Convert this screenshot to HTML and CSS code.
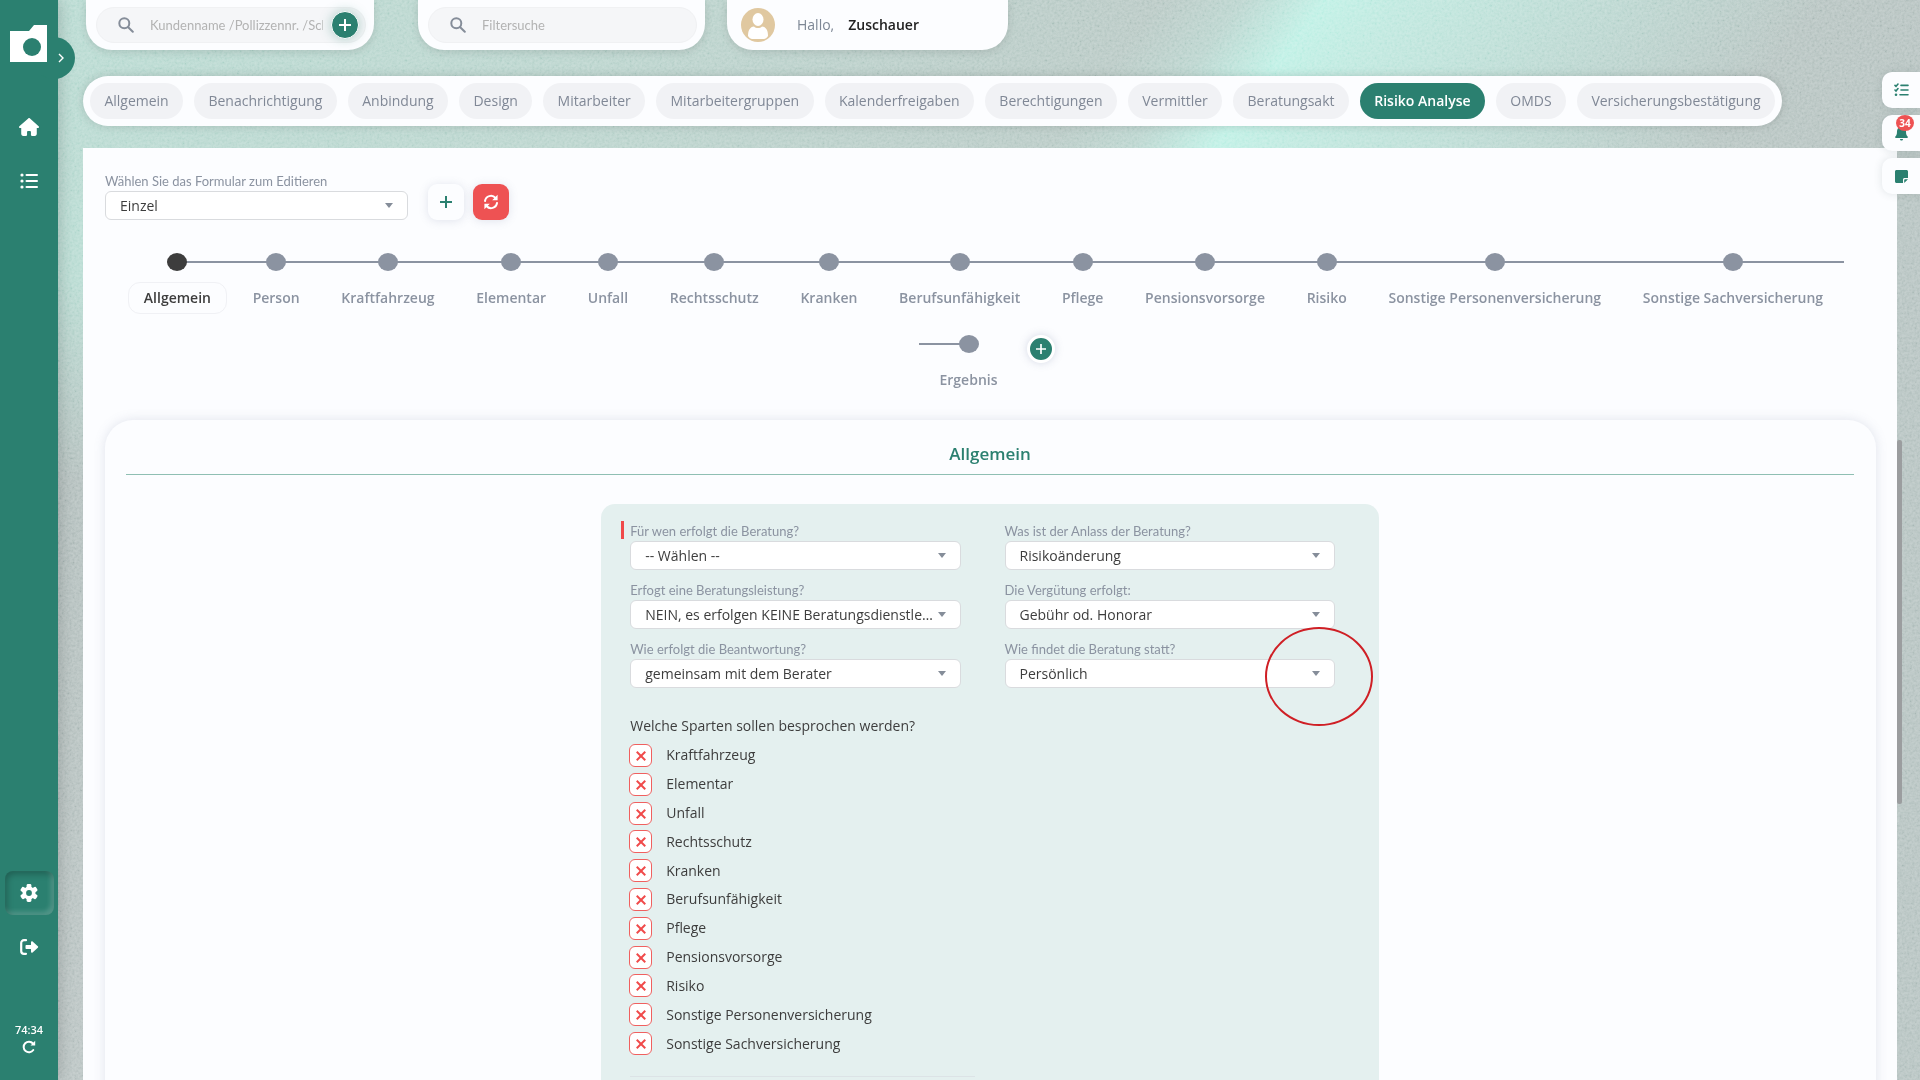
FILE: index.html
```html
<!DOCTYPE html>
<html lang="de">
<head>
<meta charset="utf-8">
<title>Risiko Analyse</title>
<link rel="stylesheet" href="styles.css">
</head>
<body>
<svg class="grain" aria-hidden="true"><filter id="noise" x="0" y="0" width="100%" height="100%"><feTurbulence type="fractalNoise" baseFrequency="0.4" numOctaves="2"/><feColorMatrix values="1.500 0 0 0 -.25  1.500 0 0 0 -.25  1.500 0 0 0 -.25  0 0 0 0 1"/></filter><rect width="100%" height="100%" filter="url(#noise)"/></svg>
<div class="app">
  <aside class="sidebar">
    <button class="toggle" aria-label="Menü öffnen"><svg width="6" height="10" viewBox="0 0 6 10"><path d="M1 1l4 4-4 4" fill="none" stroke="#fff" stroke-width="1.4"/></svg></button>
    <a class="logo" href="#" aria-label="Startseite"><svg width="37" height="37" viewBox="0 0 37 37"><path d="M0 6h19l5-6h13v37H0z" fill="#fff"/><circle cx="22" cy="22" r="9" fill="#2b8070"/></svg></a>
    <nav class="side-nav">
      <a href="#" aria-label="Home"><svg width="20" height="18" viewBox="0 0 576 512"><path fill="#fff" d="M575.8 255.5c0 18-15 32.1-32 32.1h-32l.7 160.2c0 35.300-20 64.200-56 64.200H368c-13 0-24-11-24-24v-88c0-17.700-14.300-32-32-32h-48c-17.700 0-32 14.300-32 32v88c0 13-11 24-24 24H120c-36 0-56-28.900-56-64.200V287.600H32c-18 0-32-14-32-32.100 0-9 3-17 10-24L266.400 8c7-7 15-8 22-8s15 2 21 7l255.400 224.500c8 7 12 15 11 24z"/></svg></a>
      <a href="#" aria-label="Liste"><svg width="18" height="16" viewBox="0 0 18 16"><g fill="#fff"><circle cx="2" cy="2" r="1.6"/><circle cx="2" cy="8" r="1.600"/><circle cx="2" cy="14" r="1.600"/><rect x="5.500" y="1" width="12.500" height="2" rx="1"/><rect x="5.500" y="7" width="12.500" height="2" rx="1"/><rect x="5.500" y="13" width="12.500" height="2" rx="1"/></g></svg></a>
    </nav>
    <nav class="side-nav bottom">
      <a class="current" href="#" aria-label="Einstellungen"><svg width="18" height="18" viewBox="-9 -9 18 18"><g fill="#fff"><circle r="6.500"/><rect x="-2.400" y="-9" width="4.800" height="18" rx="1.400"/><rect x="-2.400" y="-9" width="4.800" height="18" rx="1.400" transform="rotate(60)"/><rect x="-2.400" y="-9" width="4.800" height="18" rx="1.400" transform="rotate(120)"/></g><circle r="2.900" fill="#2b8070"/></svg></a>
      <a href="#" aria-label="Abmelden"><svg width="19" height="16" viewBox="0 0 19 16"><path d="M6 1.200H4A2.800 2.800 0 0 0 1.200 4v8A2.800 2.800 0 0 0 4 14.800h2" fill="none" stroke="#fff" stroke-width="2.200" stroke-linecap="round"/><path d="M6.500 6H11V3.200c0-1 1-1.200 1.600-.6l5.200 4.700c.5.400.5 1 0 1.400l-5.200 4.700c-.6.600-1.600.4-1.600-.6V10H6.500c-.6 0-1-.4-1-1V7c0-.6.4-1 1-1z" fill="#fff"/></svg></a>
    </nav>
    <span class="timer">74:34</span>
    <button class="renew" aria-label="Sitzung erneuern"><svg width="14" height="14" viewBox="0 0 14 14"><path d="M11.300 10A5.300 5.300 0 1 1 11 3.500" fill="none" stroke="#fff" stroke-width="2" stroke-linecap="round"/><path d="M13.200.8v4.700H8.500z" fill="#fff"/></svg></button>
  </aside>

  <div class="page">
    <header class="top">
      <div class="box search-client">
        <div class="search"><svg class="lens" width="16" height="16" viewBox="0 0 16 16"><circle cx="6.300" cy="6.300" r="5" /><path d="M10.200 10.200l4.600 4.600"/></svg><input type="text" aria-label="Kundensuche" placeholder="Kundenname /Pollizzennr. /Schadennr."><button class="round" aria-label="Neuer Kunde"><svg width="12" height="12" viewBox="0 0 12 12"><path d="M6 0v12M0 6h12"/></svg></button></div>
      </div>
      <div class="box search-filter">
        <div class="search"><svg class="lens" width="16" height="16" viewBox="0 0 16 16"><circle cx="6.300" cy="6.300" r="5" /><path d="M10.200 10.200l4.600 4.600"/></svg><input type="text" aria-label="Filtersuche" placeholder="Filtersuche"></div>
      </div>
      <div class="box user">
        <svg width="34" height="34" viewBox="0 0 34 34"><circle cx="17" cy="17" r="17" fill="#e0c8a0"/><ellipse cx="17" cy="11.500" rx="5.500" ry="6.500" fill="#fff"/><path d="M7 28c0-6 2-9 6-9.500 2 2 6 2 8 0 4 .5 6 3.500 6 9.500-1 2-3 3-4 3H11c-1 0-3-1-4-3z" fill="#fff"/></svg>
        <span>Hallo,</span><strong>Zuschauer</strong>
      </div>
    </header>

    <nav class="tabs">
      <a href="#">Allgemein</a><a href="#">Benachrichtigung</a><a href="#">Anbindung</a><a href="#">Design</a><a href="#">Mitarbeiter</a><a href="#">Mitarbeitergruppen</a><a href="#">Kalenderfreigaben</a><a href="#">Berechtigungen</a><a href="#">Vermittler</a><a href="#">Beratungsakt</a><a class="active" href="#">Risiko Analyse</a><a href="#">OMDS</a><a href="#">Versicherungsbestätigung</a>
    </nav>

    <main class="content">
      <div class="form-pick">
        <div class="field">
          <label for="form">Wählen Sie das Formular zum Editieren</label>
          <div class="select"><select id="form"><option>Einzel</option></select></div>
        </div>
        <button class="tool" aria-label="Hinzufügen"><svg width="12" height="12" viewBox="0 0 12 12"><path d="M6 0v12M0 6h12" stroke="#2b8070" stroke-width="2"/></svg></button>
        <button class="tool danger" aria-label="Zurücksetzen"><svg width="16" height="16" viewBox="0 0 16 16"><g fill="none" stroke="#fff" stroke-width="2" stroke-linecap="round"><path d="M2 7a6 6 0 0 1 10.500-3"/><path d="M14 9a6 6 0 0 1-10.500 3"/></g><path d="M14.600.8v5.400H9.200zM1.400 15.200V9.800h5.400z" fill="#fff"/></svg></button>
      </div>

      <ol class="steps">
        <li class="now"><a href="#">Allgemein</a></li><li><a href="#">Person</a></li><li><a href="#">Kraftfahrzeug</a></li><li><a href="#">Elementar</a></li><li><a href="#">Unfall</a></li><li><a href="#">Rechtsschutz</a></li><li><a href="#">Kranken</a></li><li><a href="#">Berufsunfähigkeit</a></li><li><a href="#">Pflege</a></li><li><a href="#">Pensionsvorsorge</a></li><li><a href="#">Risiko</a></li><li><a href="#">Sonstige Personenversicherung</a></li><li><a href="#">Sonstige Sachversicherung</a></li>
      </ol>
      <div class="steps-end">
        <ol class="steps last"><li><a href="#">Ergebnis</a></li></ol>
        <button class="round small" aria-label="Schritt hinzufügen"><svg width="10" height="10" viewBox="0 0 12 12"><path d="M6 0v12M0 6h12"/></svg></button>
      </div>

      <section class="card">
        <h1>Allgemein</h1>
        <form class="panel">
          <div class="fields">
            <div class="field required"><label for="wen">Für wen erfolgt die Beratung?</label><div class="select"><select id="wen"><option>-- Wählen --</option></select></div></div>
            <div class="field"><label for="anlass">Was ist der Anlass der Beratung?</label><div class="select"><select id="anlass"><option>Risikoänderung</option></select></div></div>
            <div class="field"><label for="leistung">Erfogt eine Beratungsleistung?</label><div class="select"><select id="leistung"><option>NEIN, es erfolgen KEINE Beratungsdienstleistungen</option></select></div></div>
            <div class="field"><label for="verg">Die Vergütung erfolgt:</label><div class="select"><select id="verg"><option>Gebühr od. Honorar</option></select></div></div>
            <div class="field"><label for="antwort">Wie erfolgt die Beantwortung?</label><div class="select"><select id="antwort"><option>gemeinsam mit dem Berater</option></select></div></div>
            <div class="field marked"><label for="statt">Wie findet die Beratung statt?</label><div class="select"><select id="statt"><option>Persönlich</option></select></div></div>
          </div>
          <fieldset class="lines">
            <legend>Welche Sparten sollen besprochen werden?</legend>
            <div class="checks">
              <label><input type="checkbox">Kraftfahrzeug</label>
              <label><input type="checkbox">Elementar</label>
              <label><input type="checkbox">Unfall</label>
              <label><input type="checkbox">Rechtsschutz</label>
              <label><input type="checkbox">Kranken</label>
              <label><input type="checkbox">Berufsunfähigkeit</label>
              <label><input type="checkbox">Pflege</label>
              <label><input type="checkbox">Pensionsvorsorge</label>
              <label><input type="checkbox">Risiko</label>
              <label><input type="checkbox">Sonstige Personenversicherung</label>
              <label><input type="checkbox">Sonstige Sachversicherung</label>
            </div>
          </fieldset>
          <hr>
        </form>
      </section>
    </main>
  </div>
</div>

<div class="scrollbar"></div>
<div class="dock">
  <button aria-label="Aufgaben"><svg width="15" height="14" viewBox="0 0 15 14"><g fill="none" stroke="#2b8070" stroke-width="1.600" stroke-linecap="round"><path d="M1 2.400l1 1L4 1M1 7l1 1 2-2.400M7 2.400h7M7 7h7M6 11.800h8"/></g><circle cx="2" cy="11.800" r="1.300" fill="#2b8070"/></svg></button>
  <button aria-label="Benachrichtigungen"><svg width="13" height="15" viewBox="0 0 13 15"><path d="M6.500 0c.6 0 1 .4 1 1 2.300.5 3.500 2.300 3.500 4.500 0 3 .7 4 1.600 5 .6.700.2 1.500-.6 1.500H1c-.8 0-1.200-.8-.6-1.500.9-1 1.600-2 1.600-5C2 3.300 3.200 1.500 5.500 1c0-.6.400-1 1-1zM5 13h3c0 2-3 2-3 0z" fill="#2b8070"/></svg><span class="badge">34</span></button>
  <button aria-label="Notizen"><svg width="13" height="13" viewBox="0 0 13 13"><path d="M1.500 0h10c.8 0 1.500.7 1.500 1.500V8H9.500C8.700 8 8 8.700 8 9.500V13H1.500C.7 13 0 12.300 0 11.500v-10C0 .7.700 0 1.500 0zM13 9.200L9.200 13V10c0-.5.300-.8.800-.8z" fill="#2b8070"/></svg></button>
</div>
</body>
</html>
```
FILE: styles.css
```css
*, ::before, ::after { box-sizing: border-box; }
:root { --green: #2b8070; --grey: #8b93a1; --red: #ee5253; --paper: #fcfdff; }
body {
  margin: 0;
  height: 100vh;
  overflow: hidden;
  font: 14px/20px "Open Sans", sans-serif;
  color: #3d3d3d;
  background:
    linear-gradient(127deg, rgb(192 241 230 / 0) 56%, rgb(192 241 230 / .3) 60%, #c0f1e6 64%, rgb(192 236 226 / .9) 68%, rgb(192 236 226 / 0) 88%) 0 0 / 100% 200px no-repeat,
    linear-gradient(100deg, #b9dcd3 0%, #bbd5ce 30%, #b9c9c5 60%, #b9c9c5 75%, #b7c3c1 100%) 0 0 / 100% 200px no-repeat,
    linear-gradient(90deg, transparent 50%, #b7c4c2 50%),
    linear-gradient(#b9dcd3 280px, #b4c0be 480px, #bbc5c4);
}
a { color: inherit; text-decoration: none; }
button { padding: 0; border: 0; font: inherit; cursor: pointer; }
ol { margin: 0; padding: 0; list-style: none; }
.grain { position: fixed; inset: 0; width: 100%; height: 100%; opacity: .2; mix-blend-mode: overlay; }
.app { position: relative; display: flex; }

.sidebar {
  position: relative;
  z-index: 2;
  flex: none;
  display: flex;
  flex-direction: column;
  align-items: center;
  width: 58px;
  height: 100vh;
  padding: 25px 0 23px;
  background: var(--green);
  color: #fff;
  box-shadow: 2px 0 14px rgb(0 0 0 / .18);
}
.toggle {
  position: absolute;
  left: 33px;
  top: 37px;
  z-index: -1;
  width: 42px;
  height: 42px;
  padding-left: 14px;
  border-radius: 50%;
  background: var(--green);
}
.logo { height: 37px; margin-right: 1px; }
.side-nav { display: flex; flex-direction: column; gap: 10px; margin-top: 43px; }
.side-nav a { display: grid; place-items: center; width: 49px; height: 44px; border-radius: 8px; }
.side-nav.bottom { margin-top: auto; margin-bottom: 52px; }
.side-nav .current { box-shadow: inset 2px 3px 6px rgb(0 0 0 / .25), inset -3px -3px 5px rgb(255 255 255 / .2); }
.timer { font-weight: 600; font-size: 11px; line-height: 18px; }
.renew { height: 18px; background: none; }

.page { flex: 1; min-width: 0; padding: 0 23px 0 25px; }
.top { display: flex; padding-left: 3px; }
.box {
  display: flex;
  align-items: center;
  height: 50px;
  padding: 0 8px 0 10px;
  background: var(--paper);
  border-radius: 0 0 26px 26px;
  box-shadow: 0 2px 8px rgb(0 0 0 / .12);
}
.search-client { width: 288px; margin-right: 44px; }
.search-filter { width: 287px; margin-right: 22px; }
.user { width: 281px; padding-left: 14px; }
.user span { margin: 0 14px 0 22px; color: #7d8795; }
.user strong { font-weight: 600; color: #222; }
.search {
  display: flex;
  align-items: center;
  width: 100%;
  height: 36px;
  padding: 0 6px 0 21px;
  border: 1px solid #f0f1f3;
  border-radius: 18px;
  background: #f5f6f8;
}
.search input {
  flex: 1;
  min-width: 0;
  margin: 0 8px 0 16px;
  padding: 0;
  border: 0;
  outline: 0;
  background: none;
  font: 13px/20px Lato, sans-serif;
}
.search input::placeholder { color: #b3b3b3; }
.lens { fill: none; stroke: #858d99; stroke-width: 2; stroke-linecap: round; }
.round {
  display: grid;
  place-items: center;
  width: 28px;
  height: 28px;
  border: 1px solid #fff;
  border-radius: 50%;
  background: var(--green);
  box-shadow: 0 0 12px rgb(43 128 112 / .35);
}
.round path { stroke: #fff; stroke-width: 2; }

.tabs {
  display: flex;
  gap: 11px;
  height: 50px;
  margin: 26px 115px 22px 0;
  padding: 7px;
  border-radius: 25px;
  background: var(--paper);
  box-shadow: 0 0 10px rgb(0 0 0 / .15);
}
.tabs a {
  flex: 1 0 auto;
  padding: 8px 0;
  border-radius: 18px;
  background: #f1f2f5;
  color: #808896;
  text-align: center;
}
.tabs .active { background: var(--green); color: #fff; font-weight: 600; }

.content { padding: 23px 21px 0 22px; min-height: 932px; background: var(--paper); }
.form-pick { display: flex; align-items: flex-end; }
.form-pick .field { width: 303px; margin-right: 20px; }
.field { position: relative; }
.field label { display: block; font: 13px/20px Lato, sans-serif; color: var(--grey); }
.select { position: relative; }
.select::after {
  content: "";
  position: absolute;
  right: 15px;
  top: 12px;
  border: 4px solid transparent;
  border-top: 5px solid #858d99;
  border-bottom: 0;
  pointer-events: none;
}
.select select {
  display: block;
  appearance: none;
  width: 100%;
  height: 29px;
  padding: 0 24px 0 14px;
  border: 1px solid #d9dbde;
  border-radius: 6px;
  background: #fff;
  font: 14px/20px "Open Sans", sans-serif;
  color: #3d3d3d;
  text-overflow: ellipsis;
}
.tool {
  display: grid;
  place-items: center;
  width: 36px;
  height: 36px;
  margin-right: 9px;
  border-radius: 9px;
  background: var(--paper);
  box-shadow: 0 1px 10px rgb(100 110 150 / .18);
}
.danger { background: var(--red); }

.steps { display: flex; margin: 33px 32px 0 18px; font-weight: 600; color: var(--grey); }
.steps li {
  position: relative;
  flex: 1 0 auto;
  display: flex;
  flex-direction: column;
  align-items: center;
}
.steps li::before {
  content: "";
  width: 20px;
  height: 18px;
  margin-bottom: 11px;
  border-radius: 50%;
  background: var(--grey);
}
.steps li::after {
  content: "";
  position: absolute;
  left: 0;
  right: 0;
  top: 8px;
  height: 2px;
  background: var(--grey);
}
.steps a { padding: 5px 15px; border: 1px solid transparent; border-radius: 12px; }
.steps .now { color: #3d3d3d; }
.steps .now::before { background: #3d3d3d; z-index: 1; }
.steps .now::after { left: 50%; }
.steps .now a { border-color: #f0f1f5; }
.steps-end { display: flex; justify-content: center; margin-top: 21px; }
.steps.last { width: 100px; margin: 0; }
.steps.last li::after { right: 50%; }
.small { width: 28px; height: 28px; margin: 0 8px; border: 3px solid #fff; box-shadow: 0 0 8px rgb(100 110 150 / .25); }

.card {
  margin-top: 24px;
  padding: 21px 22px 0 21px;
  border-radius: 28px 28px 0 0;
  background: var(--paper);
  box-shadow: 0 0 12px rgb(100 110 150 / .18);
}
.card h1 {
  margin: 0 0 29px;
  padding-bottom: 7px;
  border-bottom: 1px solid #8fbfb3;
  font-size: 17px;
  line-height: 26px;
  font-weight: 600;
  color: var(--green);
  text-align: center;
}
.panel {
  width: 45%;
  min-width: 777px;
  min-height: 600px;
  margin: 0 auto;
  padding: 17px 44px 0 29px;
  border-radius: 14px;
  background: #e4f0ef;
}
.fields { display: grid; grid-template-columns: 1fr 1fr; gap: 10px 44px; }
.required::before {
  content: "";
  position: absolute;
  left: -9px;
  top: 0;
  width: 3px;
  height: 18px;
  background: #f04a4a;
}
.marked::after {
  content: "";
  position: absolute;
  right: -38px;
  top: -12px;
  width: 108px;
  height: 99px;
  border: 2px solid #cf1f25;
  border-radius: 50%;
  pointer-events: none;
}
.lines { margin: 27px 0 0; padding: 0; border: 0; }
.lines legend { padding: 0; font-weight: 500; line-height: 22px; }
.checks { display: grid; grid-auto-rows: 1fr; height: 317px; margin-top: 4px; }
.checks label { display: flex; align-items: center; gap: 14px; }
.checks input {
  appearance: none;
  position: relative;
  width: 23px;
  height: 23px;
  margin: 0 0 0 -1px;
  border: 1px solid #f0605f;
  border-radius: 6px;
  background: #fff;
}
.checks input::before, .checks input::after {
  content: "";
  position: absolute;
  left: 5px;
  top: 10px;
  width: 12px;
  height: 2px;
  background: #f04a4a;
  transform: rotate(45deg);
}
.checks input::after { transform: rotate(-45deg); }
.panel hr { width: 345px; margin: 18px 0 0; border: 0; border-top: 1px solid #dce3e6; }

.scrollbar { position: fixed; right: 18px; top: 440px; width: 5px; height: 364px; border-radius: 2px; background: #9b9d9f; }
.dock { position: fixed; right: 0; top: 72px; display: grid; gap: 7px; }
.dock button {
  position: relative;
  display: grid;
  place-items: center;
  width: 38px;
  height: 36px;
  border-radius: 10px 0 0 10px;
  background: var(--paper);
  box-shadow: 0 0 8px rgb(60 80 90 / .15);
}
.badge {
  position: absolute;
  right: 6px;
  top: 0;
  width: 18px;
  height: 16px;
  border-radius: 50%;
  background: var(--red);
  color: #fff;
  font-weight: 700;
  font-size: 10px;
  line-height: 16px;
}
```
